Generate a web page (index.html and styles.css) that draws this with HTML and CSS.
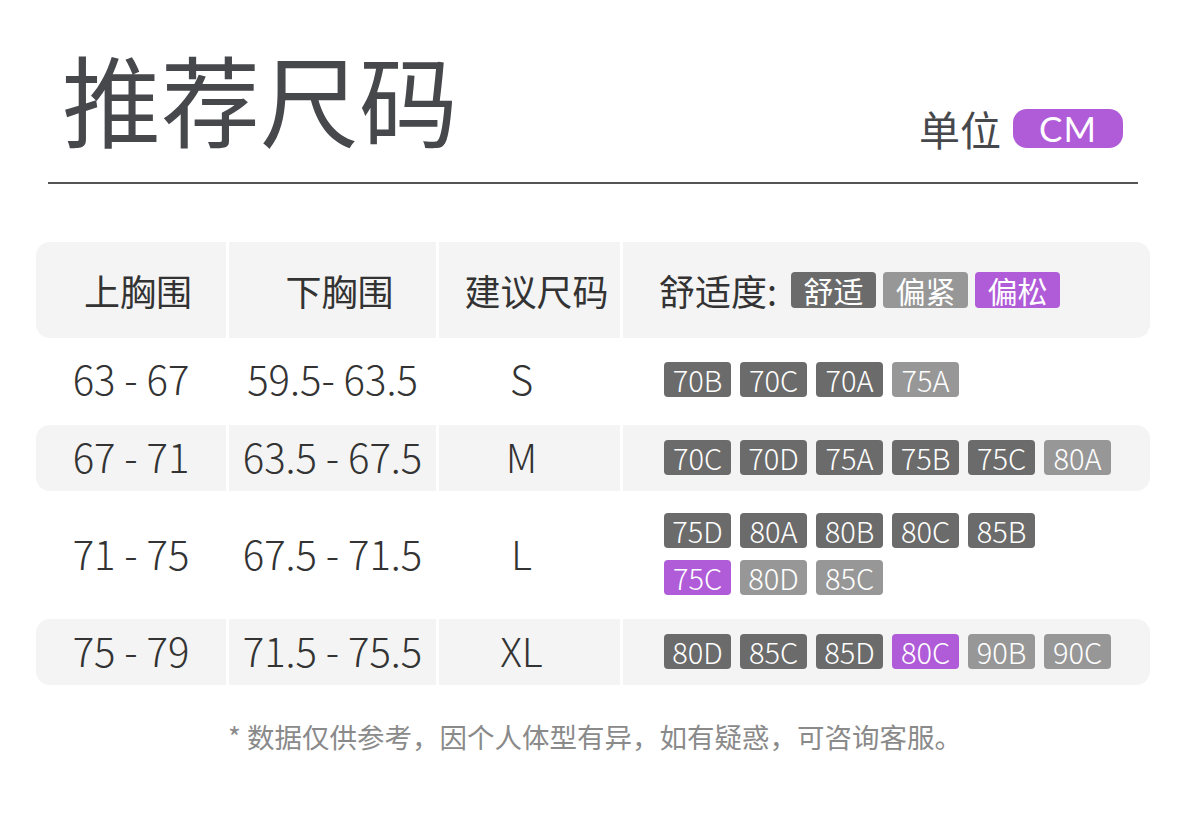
FILE: index.html
```html
<!DOCTYPE html>
<html lang="zh">
<head>
<meta charset="utf-8">
<link rel="stylesheet" href="styles.css">
</head>
<body>
<div class="page">
  <header class="head">
    <h1 class="title">推荐尺码</h1>
    <div class="unit"><span class="unit-label">单位</span><span class="unit-pill">CM</span></div>
  </header>
  <div class="rule"></div>

  <div class="table">
    <div class="row row-head">
      <div class="cell c1 hd">上胸围</div>
      <div class="cell c2 hd">下胸围</div>
      <div class="cell c3 hd">建议尺码</div>
      <div class="cell c4 hd4">
        <span class="fit-label">舒适度:</span>
        <span class="tag t-dark">舒适</span>
        <span class="tag t-light">偏紧</span>
        <span class="tag t-purple">偏松</span>
      </div>
    </div>

    <div class="row row-s plain">
      <div class="cell c1 num">63 - 67</div>
      <div class="cell c2 num">59.5- 63.5</div>
      <div class="cell c3 num">S</div>
      <div class="cell c4 sizes">
        <span class="sz t-dark">70B</span><span class="sz t-dark">70C</span><span class="sz t-dark">70A</span><span class="sz t-light">75A</span>
      </div>
    </div>

    <div class="row row-m">
      <div class="cell c1 num">67 - 71</div>
      <div class="cell c2 num">63.5 - 67.5</div>
      <div class="cell c3 num">M</div>
      <div class="cell c4 sizes">
        <span class="sz t-dark">70C</span><span class="sz t-dark">70D</span><span class="sz t-dark">75A</span><span class="sz t-dark">75B</span><span class="sz t-dark">75C</span><span class="sz t-light">80A</span>
      </div>
    </div>

    <div class="row row-l plain">
      <div class="cell c1 num">71 - 75</div>
      <div class="cell c2 num">67.5 - 71.5</div>
      <div class="cell c3 num">L</div>
      <div class="cell c4 sizes">
        <span class="sz t-dark">75D</span><span class="sz t-dark">80A</span><span class="sz t-dark">80B</span><span class="sz t-dark">80C</span><span class="sz t-dark">85B</span>
        <span class="break"></span>
        <span class="sz t-purple">75C</span><span class="sz t-light">80D</span><span class="sz t-light">85C</span>
      </div>
    </div>

    <div class="row row-xl">
      <div class="cell c1 num">75 - 79</div>
      <div class="cell c2 num">71.5 - 75.5</div>
      <div class="cell c3 num">XL</div>
      <div class="cell c4 sizes">
        <span class="sz t-dark">80D</span><span class="sz t-dark">85C</span><span class="sz t-dark">85D</span><span class="sz t-purple">80C</span><span class="sz t-light">90B</span><span class="sz t-light">90C</span>
      </div>
    </div>
  </div>

  <p class="note">* 数据仅供参考，因个人体型有异，如有疑惑，可咨询客服。</p>
</div>
</body>
</html>
```

FILE: styles.css
```css
* { box-sizing: border-box; }
html, body {
  margin: 0;
  padding: 0;
  background: #ffffff;
}
body {
  font-family: "Noto Sans CJK SC", "Noto Sans", sans-serif;
  color: #333333;
}
.page {
  width: 1200px;
  height: 816px;
  padding-top: 40px;
}
.head {
  display: flex;
  justify-content: space-between;
  align-items: flex-end;
  padding: 0 77px 0 62px;
  height: 124px;
}
.title {
  margin: 0;
  font-size: 99px;
  line-height: 1;
  font-weight: 400;
  color: #47484c;
  letter-spacing: 0;
  padding-bottom: 17px;
}
.unit {
  display: flex;
  align-items: center;
  gap: 12px;
  padding-bottom: 15px;
}
.unit-label {
  font-size: 41px;
  line-height: 1;
  color: #47484c;
}
.unit-pill {
  display: flex;
  align-items: center;
  justify-content: center;
  width: 110px;
  height: 39px;
  border-radius: 14px;
  background: #b05bd8;
  color: #ffffff;
  font-family: "Lato", "Open Sans", sans-serif;
  font-size: 35px;
  line-height: 1;
  letter-spacing: 1px;
}
.rule {
  margin: 18px 62px 0 48px;
  height: 2px;
  background: #555557;
}
.table {
  margin: 58px 50px 0 36px;
  display: flex;
  flex-direction: column;
}
.row {
  display: grid;
  grid-template-columns: 190px 207px 181px 1fr;
  column-gap: 3px;
  height: 66px;
}
.row-head { height: 96px; }
.row-s { margin-top: 9px; }
.row-m { margin-top: 12px; }
.row-l { margin-top: 14px; height: 100px; }
.row-xl { margin-top: 14px; }
.cell {
  background: #f4f4f4;
  display: flex;
  align-items: center;
  justify-content: center;
  font-size: 40px;
  font-weight: 300;
  color: #333333;
  line-height: 1;
}
.num { padding-bottom: 5px; }
.plain .cell { background: transparent; }
.c1 { border-radius: 14px 0 0 14px; }
.c4 { border-radius: 0 14px 14px 0; }
.hd {
  font-size: 36px;
  font-weight: 400;
  padding-left: 14px;
}
.c3 { padding-right: 16px; }
.hd.c3 { padding-right: 0; }
.hd4 {
  justify-content: flex-start;
  padding-left: 36px;
  gap: 7px;
  font-size: 36px;
  font-weight: 400;
}
.fit-label {
  margin-right: 7px;
}
.tag {
  display: inline-flex;
  align-items: center;
  justify-content: center;
  width: 85px;
  height: 36px;
  border-radius: 4px;
  color: #ffffff;
  font-size: 30px;
  line-height: 1;
}
.sizes {
  justify-content: flex-start;
  align-content: center;
  flex-wrap: wrap;
  padding-left: 41px;
  padding-right: 0;
  padding-bottom: 2px;
  column-gap: 9px;
  row-gap: 12px;
}
.break {
  flex-basis: 100%;
  height: 0;
}
.row-l .sizes { row-gap: 0; }
.row-l .sizes .break { margin-bottom: 12px; }
.sz {
  display: inline-flex;
  align-items: center;
  justify-content: center;
  width: 67px;
  height: 35px;
  border-radius: 4px;
  color: #ffffff;
  font-size: 29px;
  font-weight: 300;
  line-height: 1;
}
.t-dark { background: #6b6b6b; }
.t-light { background: #979797; }
.t-purple { background: #b05bd8; }
.note {
  margin: 38px 46px 0 36px;
  text-align: center;
  font-size: 27.5px;
  line-height: 1;
  color: #8a8a8a;
}
```
